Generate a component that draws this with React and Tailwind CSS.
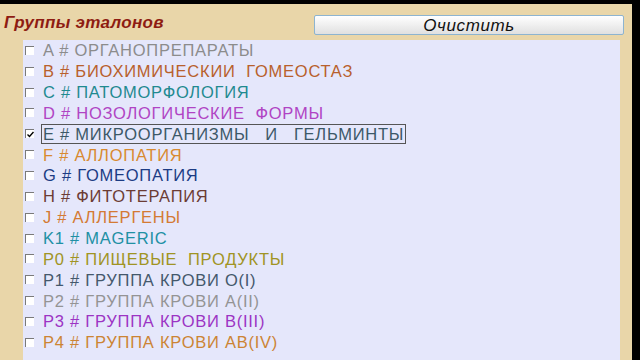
import React from 'react';

const GROUPS = [
  { label: 'A # ОРГАНОПРЕПАРАТЫ', color: 'text-[#8c8c8c]' },
  { label: 'B # БИОХИМИЧЕСКИИ  ГОМЕОСТАЗ', color: 'text-[#b8602c]' },
  { label: 'C # ПАТОМОРФОЛОГИЯ', color: 'text-[#1f8a90]' },
  { label: 'D # НОЗОЛОГИЧЕСКИЕ  ФОРМЫ', color: 'text-[#b044c4]' },
  { label: 'E # МИКРООРГАНИЗМЫ   И   ГЕЛЬМИНТЫ', color: 'text-[#3c5868]', checked: true },
  { label: 'F # АЛЛОПАТИЯ', color: 'text-[#d88a30]' },
  { label: 'G # ГОМЕОПАТИЯ', color: 'text-[#1c3c84]' },
  { label: 'H # ФИТОТЕРАПИЯ', color: 'text-[#6c3c34]' },
  { label: 'J # АЛЛЕРГЕНЫ', color: 'text-[#d47a34]' },
  { label: 'K1 # MAGERIC', color: 'text-[#2090a4]' },
  { label: 'P0 # ПИЩЕВЫЕ  ПРОДУКТЫ', color: 'text-[#a09424]' },
  { label: 'P1 # ГРУППА КРОВИ O(I)', color: 'text-[#44586c]' },
  { label: 'P2 # ГРУППА КРОВИ A(II)', color: 'text-[#949494]' },
  { label: 'P3 # ГРУППА КРОВИ B(III)', color: 'text-[#9c34c4]' },
  { label: 'P4 # ГРУППА КРОВИ AB(IV)', color: 'text-[#cc8434]' },
];

function Check({ checked }) {
  return (
    <div className="w-[9px] h-[9px] shrink-0 bg-white border-t border-l border-[#7a7a7a] flex items-center justify-center">
      {checked && (
        <svg width="7" height="7" viewBox="0 0 7 7">
          <path d="M0.5 3.5 L2.5 5.5 L6.5 1" stroke="#000" strokeWidth="1.4" fill="none" />
        </svg>
      )}
    </div>
  );
}

export default function App() {
  return (
    <div className="w-[640px] h-[360px] bg-black pt-[4px] pr-[8px] overflow-hidden font-['Liberation_Sans',Arial,sans-serif]">
      <div className="h-full bg-[#e9d6a9] flex flex-col">
        {/* шапка */}
        <div className="h-[36px] flex items-start shrink-0">
          <div className="pl-[4px] pt-[6px] text-[17px] font-bold italic text-[#8e1c12] tracking-[0.3px]">
            Группы эталонов
          </div>
          <button className="ml-auto mr-[8px] mt-[11px] w-[310px] h-[20px] border border-[#8db4d0] rounded-[2px] bg-gradient-to-b from-white to-[#e0e0e0] text-[17px] italic text-[#111] tracking-[0.6px] leading-none flex items-center justify-center">
            Очистить
          </button>
        </div>

        <div className="flex-1 ml-[23px] mr-[12px] bg-[#e5e7fb]">
          {GROUPS.map((g) => (
            <div key={g.label} className="h-[20.85px] flex items-center">
              <div className="ml-[2px] mr-[9px]">
                <Check checked={g.checked} />
              </div>
              <span
                className={`whitespace-pre text-[16.5px] leading-[18px] tracking-[0.75px] ${g.color} ${
                  g.checked ? 'outline outline-1 outline-[#555] px-[1px] -ml-[1px]' : ''
                }`}
              >
                {g.label}
              </span>
            </div>
          ))}
        </div>
      </div>
    </div>
  );
}
